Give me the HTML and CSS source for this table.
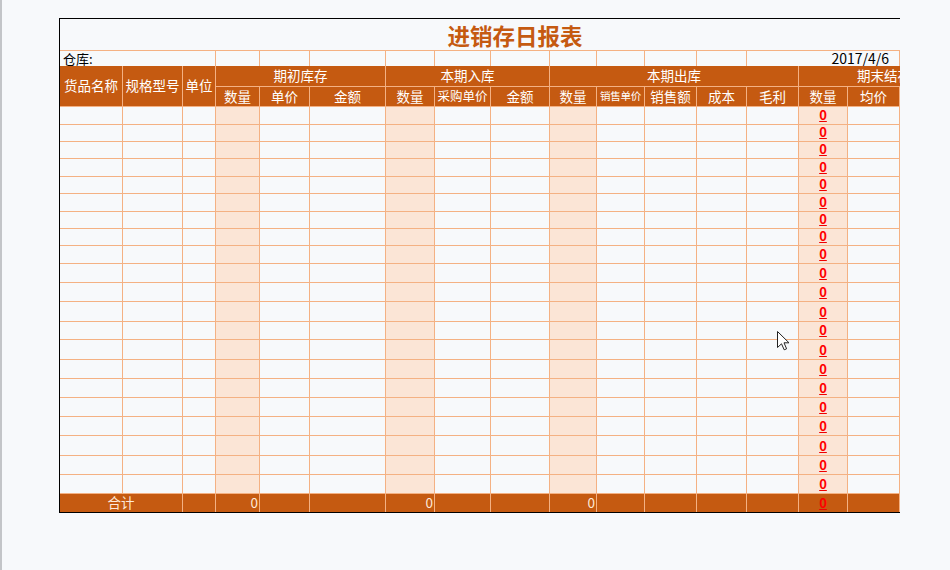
FILE: index.html
```html
<!DOCTYPE html>
<html lang="zh-CN">
<head>
<meta charset="utf-8">
<title>进销存日报表</title>
<link rel="stylesheet" href="styles.css">
</head>
<body>
<div class="frame">
  <div class="sheet">
    <div class="c title">进销存日报表</div>

    <div class="r2 lbl">仓库:</div>
    <div class="r2"></div><div class="r2"></div><div class="r2"></div><div class="r2"></div><div class="r2"></div>
    <div class="r2"></div><div class="r2"></div><div class="r2"></div><div class="r2"></div><div class="r2"></div>
    <div class="r2 date">2017/4/6</div>
    <div class="r2"></div>

    <div class="c h rs2">货品名称</div>
    <div class="c h rs2">规格型号</div>
    <div class="c h rs2">单位</div>
    <div class="c h s3">期初库存</div>
    <div class="c h s3">本期入库</div>
    <div class="c h s5">本期出库</div>
    <div class="c h s3">期末结存</div>

    <div class="c h">数量</div><div class="c h">单价</div><div class="c h">金额</div>
    <div class="c h">数量</div><div class="c h md">采购单价</div><div class="c h">金额</div>
    <div class="c h">数量</div><div class="c h sm">销售单价</div><div class="c h">销售额</div><div class="c h">成本</div><div class="c h">毛利</div>
    <div class="c h">数量</div><div class="c h">均价</div><div class="c h">金额</div>

    <div class="c"></div><div class="c"></div><div class="c"></div><div class="c q"></div><div class="c"></div><div class="c"></div><div class="c q"></div><div class="c"></div><div class="c"></div><div class="c q"></div><div class="c"></div><div class="c"></div><div class="c"></div><div class="c"></div><div class="c q z"><span class="zero">0</span></div><div class="c"></div><div class="c"></div>
    <div class="c"></div><div class="c"></div><div class="c"></div><div class="c q"></div><div class="c"></div><div class="c"></div><div class="c q"></div><div class="c"></div><div class="c"></div><div class="c q"></div><div class="c"></div><div class="c"></div><div class="c"></div><div class="c"></div><div class="c q z"><span class="zero">0</span></div><div class="c"></div><div class="c"></div>
    <div class="c"></div><div class="c"></div><div class="c"></div><div class="c q"></div><div class="c"></div><div class="c"></div><div class="c q"></div><div class="c"></div><div class="c"></div><div class="c q"></div><div class="c"></div><div class="c"></div><div class="c"></div><div class="c"></div><div class="c q z"><span class="zero">0</span></div><div class="c"></div><div class="c"></div>
    <div class="c"></div><div class="c"></div><div class="c"></div><div class="c q"></div><div class="c"></div><div class="c"></div><div class="c q"></div><div class="c"></div><div class="c"></div><div class="c q"></div><div class="c"></div><div class="c"></div><div class="c"></div><div class="c"></div><div class="c q z"><span class="zero">0</span></div><div class="c"></div><div class="c"></div>
    <div class="c"></div><div class="c"></div><div class="c"></div><div class="c q"></div><div class="c"></div><div class="c"></div><div class="c q"></div><div class="c"></div><div class="c"></div><div class="c q"></div><div class="c"></div><div class="c"></div><div class="c"></div><div class="c"></div><div class="c q z"><span class="zero">0</span></div><div class="c"></div><div class="c"></div>
    <div class="c"></div><div class="c"></div><div class="c"></div><div class="c q"></div><div class="c"></div><div class="c"></div><div class="c q"></div><div class="c"></div><div class="c"></div><div class="c q"></div><div class="c"></div><div class="c"></div><div class="c"></div><div class="c"></div><div class="c q z"><span class="zero">0</span></div><div class="c"></div><div class="c"></div>
    <div class="c"></div><div class="c"></div><div class="c"></div><div class="c q"></div><div class="c"></div><div class="c"></div><div class="c q"></div><div class="c"></div><div class="c"></div><div class="c q"></div><div class="c"></div><div class="c"></div><div class="c"></div><div class="c"></div><div class="c q z"><span class="zero">0</span></div><div class="c"></div><div class="c"></div>
    <div class="c"></div><div class="c"></div><div class="c"></div><div class="c q"></div><div class="c"></div><div class="c"></div><div class="c q"></div><div class="c"></div><div class="c"></div><div class="c q"></div><div class="c"></div><div class="c"></div><div class="c"></div><div class="c"></div><div class="c q z"><span class="zero">0</span></div><div class="c"></div><div class="c"></div>
    <div class="c"></div><div class="c"></div><div class="c"></div><div class="c q"></div><div class="c"></div><div class="c"></div><div class="c q"></div><div class="c"></div><div class="c"></div><div class="c q"></div><div class="c"></div><div class="c"></div><div class="c"></div><div class="c"></div><div class="c q z"><span class="zero">0</span></div><div class="c"></div><div class="c"></div>
    <div class="c"></div><div class="c"></div><div class="c"></div><div class="c q"></div><div class="c"></div><div class="c"></div><div class="c q"></div><div class="c"></div><div class="c"></div><div class="c q"></div><div class="c"></div><div class="c"></div><div class="c"></div><div class="c"></div><div class="c q z"><span class="zero">0</span></div><div class="c"></div><div class="c"></div>
    <div class="c"></div><div class="c"></div><div class="c"></div><div class="c q"></div><div class="c"></div><div class="c"></div><div class="c q"></div><div class="c"></div><div class="c"></div><div class="c q"></div><div class="c"></div><div class="c"></div><div class="c"></div><div class="c"></div><div class="c q z"><span class="zero">0</span></div><div class="c"></div><div class="c"></div>
    <div class="c"></div><div class="c"></div><div class="c"></div><div class="c q"></div><div class="c"></div><div class="c"></div><div class="c q"></div><div class="c"></div><div class="c"></div><div class="c q"></div><div class="c"></div><div class="c"></div><div class="c"></div><div class="c"></div><div class="c q z"><span class="zero">0</span></div><div class="c"></div><div class="c"></div>
    <div class="c"></div><div class="c"></div><div class="c"></div><div class="c q"></div><div class="c"></div><div class="c"></div><div class="c q"></div><div class="c"></div><div class="c"></div><div class="c q"></div><div class="c"></div><div class="c"></div><div class="c"></div><div class="c"></div><div class="c q z"><span class="zero">0</span></div><div class="c"></div><div class="c"></div>
    <div class="c"></div><div class="c"></div><div class="c"></div><div class="c q"></div><div class="c"></div><div class="c"></div><div class="c q"></div><div class="c"></div><div class="c"></div><div class="c q"></div><div class="c"></div><div class="c"></div><div class="c"></div><div class="c"></div><div class="c q z"><span class="zero">0</span></div><div class="c"></div><div class="c"></div>
    <div class="c"></div><div class="c"></div><div class="c"></div><div class="c q"></div><div class="c"></div><div class="c"></div><div class="c q"></div><div class="c"></div><div class="c"></div><div class="c q"></div><div class="c"></div><div class="c"></div><div class="c"></div><div class="c"></div><div class="c q z"><span class="zero">0</span></div><div class="c"></div><div class="c"></div>
    <div class="c"></div><div class="c"></div><div class="c"></div><div class="c q"></div><div class="c"></div><div class="c"></div><div class="c q"></div><div class="c"></div><div class="c"></div><div class="c q"></div><div class="c"></div><div class="c"></div><div class="c"></div><div class="c"></div><div class="c q z"><span class="zero">0</span></div><div class="c"></div><div class="c"></div>
    <div class="c"></div><div class="c"></div><div class="c"></div><div class="c q"></div><div class="c"></div><div class="c"></div><div class="c q"></div><div class="c"></div><div class="c"></div><div class="c q"></div><div class="c"></div><div class="c"></div><div class="c"></div><div class="c"></div><div class="c q z"><span class="zero">0</span></div><div class="c"></div><div class="c"></div>
    <div class="c"></div><div class="c"></div><div class="c"></div><div class="c q"></div><div class="c"></div><div class="c"></div><div class="c q"></div><div class="c"></div><div class="c"></div><div class="c q"></div><div class="c"></div><div class="c"></div><div class="c"></div><div class="c"></div><div class="c q z"><span class="zero">0</span></div><div class="c"></div><div class="c"></div>
    <div class="c"></div><div class="c"></div><div class="c"></div><div class="c q"></div><div class="c"></div><div class="c"></div><div class="c q"></div><div class="c"></div><div class="c"></div><div class="c q"></div><div class="c"></div><div class="c"></div><div class="c"></div><div class="c"></div><div class="c q z"><span class="zero">0</span></div><div class="c"></div><div class="c"></div>
    <div class="c"></div><div class="c"></div><div class="c"></div><div class="c q"></div><div class="c"></div><div class="c"></div><div class="c q"></div><div class="c"></div><div class="c"></div><div class="c q"></div><div class="c"></div><div class="c"></div><div class="c"></div><div class="c"></div><div class="c q z"><span class="zero">0</span></div><div class="c"></div><div class="c"></div>
    <div class="c"></div><div class="c"></div><div class="c"></div><div class="c q"></div><div class="c"></div><div class="c"></div><div class="c q"></div><div class="c"></div><div class="c"></div><div class="c q"></div><div class="c"></div><div class="c"></div><div class="c"></div><div class="c"></div><div class="c q z"><span class="zero">0</span></div><div class="c"></div><div class="c"></div>

    <div class="t sum">合计</div>
    <div class="t"></div>
    <div class="t num">0</div><div class="t"></div><div class="t"></div>
    <div class="t num">0</div><div class="t"></div><div class="t"></div>
    <div class="t num">0</div><div class="t"></div><div class="t"></div><div class="t"></div><div class="t"></div>
    <div class="t z"><span class="zero">0</span></div><div class="t"></div><div class="t"></div>
  </div>
</div>

<svg class="cursor" width="13" height="20" viewBox="0 0 13 20" aria-hidden="true">
  <path d="M0.5 0.5 L0.5 16.5 L4.5 12.8 L7.2 18.8 L9.6 17.8 L7 11.8 L12 11.8 Z" fill="#fff" stroke="#222" stroke-width="1" stroke-linejoin="miter"/>
</svg>
</body>
</html>
```

FILE: styles.css
```css
html, body {
  margin: 0;
}

body {
  position: relative;
  height: 570px;
  box-sizing: border-box;
  border-left: 2px solid #c3c5c8;
  background: #f7f9fb;
  font-family: "Noto Sans CJK SC", "Noto Sans", sans-serif;
  color: #000;
  overflow: hidden;
}

.frame {
  margin: 18px 0 0 57px;
  width: 841px;
  box-sizing: border-box;
  border-left: 1px solid #000;
  border-top: 1px solid #000;
  border-bottom: 1px solid #000;
  overflow: hidden;
}

.sheet {
  display: grid;
  width: 910px;
  grid-template-columns: 63px 60px 33px 44px 50px 76px 49px 56px 59px 47px 48px 52px 50px 52px 49px 52px 70px;
  grid-template-rows: 32px 15px 21px 20px
    18px 17px 17px 18px 17px 18px 17px 17px 18px 19px 19px
    20px 18px 20px 19px 19px 19px 19px 20px 19px 19px
    18px;
}

.c {
  box-sizing: border-box;
  min-width: 0;
  border-right: 1px solid #f4b183;
  border-bottom: 1px solid #f4b183;
}

.title {
  grid-column: 1 / -1;
  border-right: none;
  display: flex;
  align-items: center;
  justify-content: center;
  color: #c55a11;
  font-size: 22.5px;
  font-weight: 700;
  line-height: 1;
  padding-top: 1px;
}

.r2 {
  box-sizing: border-box;
  min-width: 0;
  border-right: 1px solid #f4b183;
  font-size: 13px;
  line-height: 15px;
  white-space: nowrap;
}

.lbl {
  grid-column: span 3;
  padding-left: 3px;
}

.date {
  grid-column: span 3;
  text-align: right;
  padding-right: 10px;
  font-size: 14px;
  line-height: 15px;
}

.h {
  background: #c55a11;
  color: #fff;
  display: flex;
  align-items: center;
  justify-content: center;
  font-size: 13.5px;
  line-height: 1;
  white-space: nowrap;
  overflow: hidden;
}

.rs2 { grid-row: span 2; }
.s3 { grid-column: span 3; }
.s5 { grid-column: span 5; }

.md { font-size: 12.5px; }
.sm { font-size: 10.5px; letter-spacing: -0.2px; }

.q { background: #fbe5d6; }

.z {
  display: flex;
  justify-content: center;
  align-items: flex-end;
}

.zero {
  color: #f00;
  font-weight: 700;
  font-size: 13px;
  line-height: 12px;
  padding-bottom: 3px;
  text-decoration: underline;
  text-decoration-color: #e00;
  text-underline-offset: 1px;
}

.t {
  box-sizing: border-box;
  min-width: 0;
  background: #c55a11;
  border-right: 1px solid #f4b183;
  color: #fde9d9;
  font-size: 13.5px;
  line-height: 1;
  display: flex;
  align-items: center;
}

.t.z {
  align-items: flex-end;
}

.sum {
  grid-column: span 2;
  justify-content: center;
}

.num {
  justify-content: flex-end;
  padding-right: 1px;
}

.cursor {
  position: absolute;
  left: 775px;
  top: 331px;
}
```
